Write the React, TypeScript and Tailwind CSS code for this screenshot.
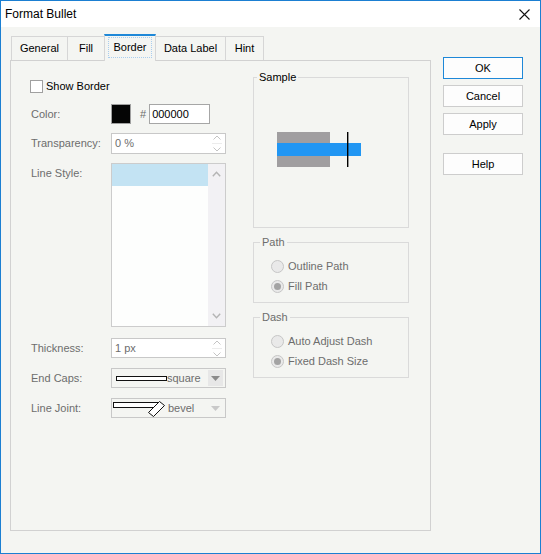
import React from 'react';

const font = "font-['Liberation_Sans',Arial,sans-serif]";

function Spinner() {
  return (
    <div className="flex flex-col items-center justify-center gap-[3px] w-[14px] h-full">
      <svg width="8" height="5" viewBox="0 0 8 5">
        <polyline points="0.5,4.5 4,1 7.5,4.5" fill="none" stroke="#c4c4c4" strokeWidth="1" />
      </svg>
      <div className="w-[10px] h-px bg-[#ececec]" />
      <svg width="8" height="5" viewBox="0 0 8 5">
        <polyline points="0.5,0.5 4,4 7.5,0.5" fill="none" stroke="#c4c4c4" strokeWidth="1" />
      </svg>
    </div>
  );
}

function Label({ children }: { children: React.ReactNode }) {
  return <div className="w-[81px] pl-px text-[#6d6d6d]">{children}</div>;
}

function Radio({ label, checked }: { label: string; checked?: boolean }) {
  return (
    <div className="flex items-center h-[20px]">
      <div className="w-[13px] h-[13px] rounded-full border border-[#c6c6c6] bg-[#e9e9e9] flex items-center justify-center">
        {checked && <div className="w-[7px] h-[7px] rounded-full bg-[#a3a3a3]" />}
      </div>
      <span className="ml-[4px] text-[#6d6d6d]">{label}</span>
    </div>
  );
}

function Group({ title, dark, className, children }: { title: string; dark?: boolean; className?: string; children: React.ReactNode }) {
  return (
    <div className={`relative border border-[#dadada] ${className ?? ''}`}>
      <span className={`absolute -top-[8px] px-[2px] bg-[#f4f5f2] leading-[14px] ${dark ? 'left-[3px] text-black' : 'left-[6px] text-[#6d6d6d]'}`}>
        {title}
      </span>
      {children}
    </div>
  );
}

const tabs = [
  { name: 'General', w: 'w-[57px]' },
  { name: 'Fill', w: 'w-[38px]' },
  { name: 'Border', w: 'w-[52px]', active: true },
  { name: 'Data Label', w: 'w-[71px]' },
  { name: 'Hint', w: 'w-[39px]' },
];

export default function App() {
  return (
    <div className={`${font} text-[11px] text-black w-[541px] h-[554px] border border-[#1b7fd2] bg-[#f4f5f2] flex flex-col`}>
      {/* Title bar */}
      <div className="h-[26px] bg-white flex items-center justify-between pl-[4px] pr-[10px] shrink-0">
        <span className="text-[12px]">Format Bullet</span>
        <svg width="11" height="11" viewBox="0 0 11 11">
          <path d="M0.5 0.5 L10.5 10.5 M10.5 0.5 L0.5 10.5" stroke="#111" strokeWidth="1.1" />
        </svg>
      </div>

      <div className="flex pl-[9px] pt-[7px]">
        {/* Tab control */}
        <div className="w-[421px] flex flex-col">
          <div className="flex items-end h-[26px] pl-px">
            {tabs.map((t, i) =>
              t.active ? (
                <div
                  key={t.name}
                  className={`${t.w} h-[27px] -mb-px -ml-px relative z-10 border-x border-[#d6d6d6] border-t-2 border-t-[#1e88d8] bg-[#f4f5f2] flex items-start justify-center pt-[1px] px-[3px]`}
                >
                  <div className="w-full h-[21px] border border-dotted border-[#a9cdee] flex items-center justify-center">{t.name}</div>
                </div>
              ) : (
                <div
                  key={t.name}
                  className={`${t.w} h-[24px] ${i === 0 ? '' : '-ml-px'} border-x border-t border-[#d6d6d6] bg-[#f4f5f2] flex items-center justify-center`}
                >
                  {t.name}
                </div>
              )
            )}
          </div>

          <div className="h-[471px] border border-[#d1d1d1] flex pl-[19px] pt-[19px]">
            {/* Left column */}
            <div className="w-[196px] flex flex-col">
              <div className="flex items-center h-[13px]">
                <div className="w-[13px] h-[13px] border border-[#a0a0a0] bg-white" />
                <span className="ml-[3px]">Show Border</span>
              </div>

              <div className="flex items-center h-[20px] mt-[11px]">
                <Label>Color:</Label>
                <div className="w-[20px] h-[20px] border border-[#a0a0a0] bg-[#050505]" />
                <span className="ml-[9px] text-[#6d6d6d]">#</span>
                <div className="ml-[3px] w-[61px] h-[20px] border border-[#a6a6a6] bg-white flex items-center pl-[2px]">000000</div>
              </div>

              <div className="flex items-center h-[21px] mt-[9px]">
                <Label>Transparency:</Label>
                <div className="w-[115px] h-[21px] border border-[#c8c8c8] bg-white flex items-center justify-between pl-[3px] pr-[1px] text-[#6d6d6d]">
                  <span>0 %</span>
                  <Spinner />
                </div>
              </div>

              <div className="flex items-start mt-[9px]">
                <div className="w-[81px] pl-px text-[#6d6d6d] h-[20px] flex items-center">Line Style:</div>
                <div className="w-[115px] h-[164px] border border-[#cccccc] bg-[#fdfefd] flex">
                  <div className="flex-1">
                    <div className="h-[22px] bg-[#c3e3f3]" />
                  </div>
                  <div className="w-[17px] bg-[#f2f1f4] flex flex-col items-center justify-between py-[7px]">
                    <svg width="9" height="6" viewBox="0 0 9 6">
                      <polyline points="0.8,5.2 4.5,1.2 8.2,5.2" fill="none" stroke="#b4b4b4" strokeWidth="1.4" />
                    </svg>
                    <svg width="9" height="6" viewBox="0 0 9 6">
                      <polyline points="0.8,0.8 4.5,4.8 8.2,0.8" fill="none" stroke="#b4b4b4" strokeWidth="1.4" />
                    </svg>
                  </div>
                </div>
              </div>

              <div className="flex items-center h-[20px] mt-[11px]">
                <Label>Thickness:</Label>
                <div className="w-[115px] h-[20px] border border-[#c8c8c8] bg-white flex items-center justify-between pl-[3px] pr-[1px] text-[#6d6d6d]">
                  <span>1 px</span>
                  <Spinner />
                </div>
              </div>

              <div className="flex items-center h-[20px] mt-[10px]">
                <Label>End Caps:</Label>
                <div className="w-[115px] h-[20px] border border-[#c8c8c8] flex items-center pl-[4px] pr-[2px] text-[#6d6d6d]">
                  <svg width="51" height="5" viewBox="0 0 51 5">
                    <rect x="0.5" y="0.5" width="50" height="4" fill="#fff" stroke="#111" strokeWidth="1" />
                  </svg>
                  <span className="flex-1">square</span>
                  <div className="w-[15px] h-[16px] bg-[#e7e7e7] flex items-center justify-center">
                    <svg width="9" height="5" viewBox="0 0 9 5">
                      <polygon points="0,0 9,0 4.5,5" fill="#8b8b8b" />
                    </svg>
                  </div>
                </div>
              </div>

              <div className="flex items-center h-[20px] mt-[10px]">
                <Label>Line Joint:</Label>
                <div className="w-[115px] h-[20px] border border-[#c8c8c8] flex items-center pl-px pr-[2px] text-[#6d6d6d]">
                  <svg width="54" height="18" viewBox="0 0 54 18">
                    <rect x="0.5" y="3.5" width="45" height="5" fill="#fff" stroke="#111" strokeWidth="1" />
                    <polygon points="46.5,2.5 51.5,6.5 40.5,17.5 35.5,13.5" fill="#fff" stroke="#111" strokeWidth="1" />
                  </svg>
                  <span className="ml-px flex-1">bevel</span>
                  <div className="w-[15px] h-[16px] flex items-center justify-center">
                    <svg width="9" height="5" viewBox="0 0 9 5">
                      <polygon points="0,0 9,0 4.5,5" fill="#c9c9c9" />
                    </svg>
                  </div>
                </div>
              </div>
            </div>

            {/* Right column */}
            <div className="ml-[27px] w-[156px] flex flex-col -mt-[3px]">
              <Group title="Sample" dark className="h-[151px] pl-[23px] pt-[54px]">
                <svg width="86" height="35" viewBox="0 0 86 35">
                  <rect x="0" y="0" width="53" height="35" fill="#a09ea0" />
                  <rect x="0" y="11" width="84" height="13" fill="#2196f3" />
                  <rect x="70" y="0" width="1.4" height="35" fill="#000" />
                </svg>
              </Group>

              <Group title="Path" className="h-[61px] mt-[14px] pl-[17px] pt-[13px]">
                <Radio label="Outline Path" />
                <Radio label="Fill Path" checked />
              </Group>

              <Group title="Dash" className="h-[61px] mt-[14px] pl-[17px] pt-[13px]">
                <Radio label="Auto Adjust Dash" />
                <Radio label="Fixed Dash Size" checked />
              </Group>
            </div>
          </div>
        </div>

        {/* Buttons */}
        <div className="ml-[12px] pt-[23px] flex flex-col">
          <button className="w-[80px] h-[22px] border border-[#1e88d8] bg-[#fdfdfd] flex items-center justify-center">OK</button>
          <button className="mt-[6px] w-[80px] h-[22px] border border-[#cdcdcd] bg-[#fdfdfd] flex items-center justify-center">Cancel</button>
          <button className="mt-[6px] w-[80px] h-[22px] border border-[#cdcdcd] bg-[#fdfdfd] flex items-center justify-center">Apply</button>
          <button className="mt-[18px] w-[80px] h-[22px] border border-[#cdcdcd] bg-[#fdfdfd] flex items-center justify-center">Help</button>
        </div>
      </div>
    </div>
  );
}
